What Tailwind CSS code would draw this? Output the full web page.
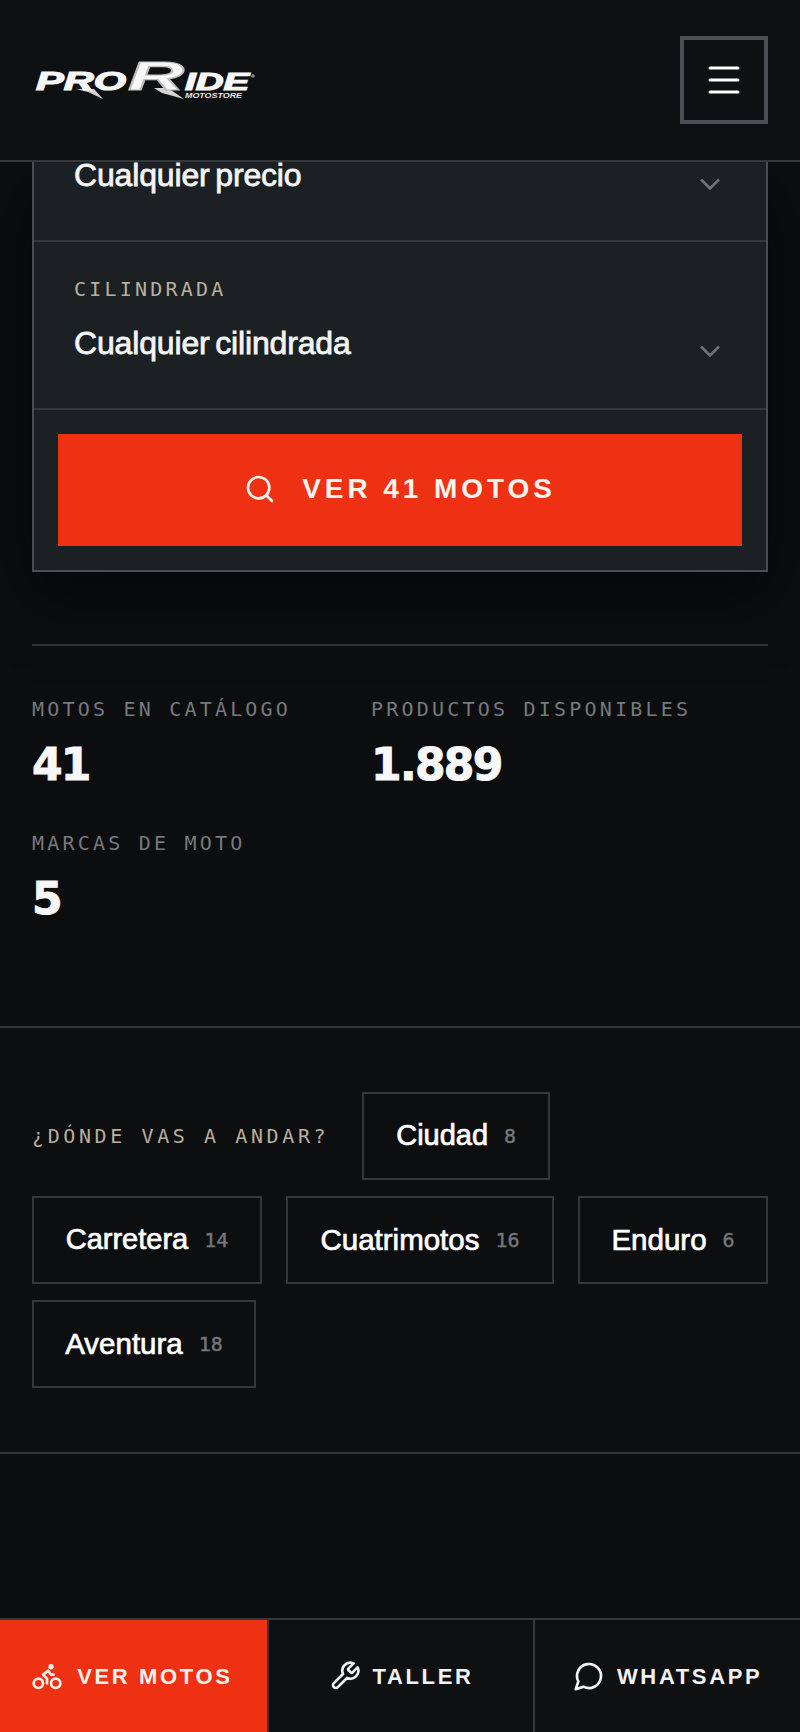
<!DOCTYPE html>
<html lang="es">
<head>
  <meta charset="UTF-8" />
  <meta name="viewport" content="width=device-width, initial-scale=1.0"/>
  <title>ProRide Motostore</title>
  <script src="https://cdn.jsdelivr.net/npm/@tailwindcss/browser@4"></script>
</head>
<body class="bg-[#0b0d0f] text-white font-['Liberation_Sans',Arial,sans-serif]">
<div class="h-[1732px] w-[800px] flex flex-col overflow-hidden">

  <!-- Header -->
  <header class="h-[162px] shrink-0 bg-[#0e1012] border-b-2 border-[#34373b] flex items-center justify-between px-8">
    <svg width="228" height="40" viewBox="0 0 228 40" class="overflow-visible font-['Liberation_Sans',sans-serif]" role="img" aria-label="ProRide Motostore">
      <polygon points="44,29 62,29 71,39 56,32" fill="#d0d0d0"/>
      <polygon points="122,28 136,28 152,39 130,33" fill="#d5d5d5"/>
      <text x="4" y="30" font-size="25" font-weight="700" font-style="italic" fill="#f7f7f7" stroke="#f7f7f7" stroke-width="1.2" textLength="90" lengthAdjust="spacingAndGlyphs">PRO</text>
      <text x="96" y="30" font-size="40" font-weight="700" font-style="italic" fill="#f7f7f7" stroke="#bdbdbd" stroke-width="1.2" textLength="56" lengthAdjust="spacingAndGlyphs">R</text>
      <text x="153" y="30" font-size="23" font-weight="700" font-style="italic" fill="#f7f7f7" stroke="#f7f7f7" stroke-width="1.2" textLength="64" lengthAdjust="spacingAndGlyphs">IDE</text>
      <text x="153" y="38" font-size="7.5" font-weight="700" font-style="italic" fill="#e8e8e8" textLength="57" lengthAdjust="spacingAndGlyphs">MOTOSTORE</text>
      <circle cx="221" cy="16" r="1.8" fill="#8a8a8a"/>
    </svg>
    <button class="w-[88px] h-[88px] border-4 border-[#4b4e54] flex items-center justify-center">
      <svg width="32" height="30" viewBox="0 0 32 30" fill="none" stroke="#fff" stroke-width="3" stroke-linecap="round">
        <path d="M2 3h28M2 15h28M2 27h28"/>
      </svg>
    </button>
  </header>

  <main class="flex-1 overflow-hidden">
    <div class="px-8">
      <!-- Filtros -->
      <div class="bg-[#1b2023] border-x-2 border-b-2 border-[#4b4e54] shadow-[0_24px_60px_rgba(0,0,0,0.5)]">
        <div class="h-[80px] border-b-2 border-[#33383b] flex justify-between pl-10 pr-[46px]">
          <span class="-mt-[1px] text-[32px] leading-[28px] tracking-[-0.005em] [word-spacing:-3px] [-webkit-text-stroke:0.8px_#f4f4f4] text-[#f4f4f4]">Cualquier precio</span>
          <svg width="20" height="12" viewBox="0 0 20 12" fill="none" stroke="#6f7378" stroke-width="2.6" class="mt-[16px]"><path d="M1 1.5l9 9 9-9"/></svg>
        </div>
        <div class="h-[168px] border-b-2 border-[#33383b] pl-10 pr-[46px] pt-[37px]">
          <div class="font-['DejaVu_Sans_Mono',monospace] text-[20px] leading-[20px] tracking-[3.2px] text-[#b8b09c]">CILINDRADA</div>
          <div class="flex justify-between mt-[24px]">
            <span class="text-[32px] leading-[40px] tracking-[-0.005em] [word-spacing:-3px] [-webkit-text-stroke:0.8px_#f4f4f4] text-[#f4f4f4]">Cualquier cilindrada</span>
            <svg width="20" height="12" viewBox="0 0 20 12" fill="none" stroke="#6f7378" stroke-width="2.6" class="mt-[22px]"><path d="M1 1.5l9 9 9-9"/></svg>
          </div>
        </div>
        <div class="p-6">
          <button class="w-full h-[112px] pb-[2px] bg-[#ee3112] flex items-center justify-center gap-[26px] text-[28px] font-bold tracking-[0.14em] text-[#fff5ee]">
            <svg width="32" height="32" viewBox="0 0 24 24" fill="none" stroke="currentColor" stroke-width="2" stroke-linecap="round" stroke-linejoin="round"><circle cx="11" cy="11" r="8"/><path d="m21 21-4.3-4.3"/></svg>
            VER 41 MOTOS
          </button>
        </div>
      </div>

      <!-- Cifras -->
      <div class="mt-[72px] border-t-2 border-[#2f3236] pt-[53px] pb-[104px] flex flex-wrap gap-x-[80px] gap-y-[45px]">
        <div>
          <div class="font-['DejaVu_Sans_Mono',monospace] text-[20px] leading-[20px] tracking-[3.2px] text-[#77797d]">MOTOS EN CATÁLOGO</div>
          <div class="mt-[23px] text-[44px] leading-[46px] font-bold tracking-[-0.04em] [-webkit-text-stroke:1px_#f7f7f7] font-['DejaVu_Sans',sans-serif] text-[#f7f7f7]">41</div>
        </div>
        <div>
          <div class="font-['DejaVu_Sans_Mono',monospace] text-[20px] leading-[20px] tracking-[3.2px] text-[#77797d]">PRODUCTOS DISPONIBLES</div>
          <div class="mt-[23px] text-[44px] leading-[46px] font-bold tracking-[-0.04em] [-webkit-text-stroke:1px_#f7f7f7] font-['DejaVu_Sans',sans-serif] text-[#f7f7f7]">1.889</div>
        </div>
        <div>
          <div class="font-['DejaVu_Sans_Mono',monospace] text-[20px] leading-[20px] tracking-[3.2px] text-[#77797d]">MARCAS DE MOTO</div>
          <div class="mt-[23px] text-[44px] leading-[46px] font-bold tracking-[-0.04em] [-webkit-text-stroke:1px_#f7f7f7] font-['DejaVu_Sans',sans-serif] text-[#f7f7f7]">5</div>
        </div>
      </div>
    </div>

    <!-- Terreno -->
    <section class="border-y-2 border-[#2f3236] px-8 pt-[64px] pb-[64px] flex flex-wrap items-center gap-x-6 gap-y-4 bg-[#0c0e10]">
      <span class="mr-[9px] font-['DejaVu_Sans_Mono',monospace] text-[20px] leading-[20px] tracking-[3.6px] text-[#b8b09c]">¿DÓNDE VAS A ANDAR?</span>
      <a class="w-[188px] h-[88px] border-2 border-[#33373a] flex items-center justify-center gap-4 text-[29px] [-webkit-text-stroke:0.7px_white]">Ciudad <span class="font-['DejaVu_Sans_Mono',monospace] text-[20px] [-webkit-text-stroke:0.4px_#75787b] text-[#75787b]">8</span></a>
      <a class="w-[230px] h-[88px] border-2 border-[#33373a] flex items-center justify-center gap-4 text-[29px] [-webkit-text-stroke:0.7px_white]">Carretera <span class="font-['DejaVu_Sans_Mono',monospace] text-[20px] [-webkit-text-stroke:0.4px_#75787b] text-[#75787b]">14</span></a>
      <a class="w-[268px] h-[88px] border-2 border-[#33373a] flex items-center justify-center gap-4 text-[29.5px] [-webkit-text-stroke:0.7px_white]">Cuatrimotos <span class="font-['DejaVu_Sans_Mono',monospace] text-[20px] [-webkit-text-stroke:0.4px_#75787b] text-[#75787b]">16</span></a>
      <a class="w-[190px] h-[88px] border-2 border-[#33373a] flex items-center justify-center gap-4 text-[29.5px] [-webkit-text-stroke:0.7px_white]">Enduro <span class="font-['DejaVu_Sans_Mono',monospace] text-[20px] [-webkit-text-stroke:0.4px_#75787b] text-[#75787b]">6</span></a>
      <a class="w-[224px] h-[88px] border-2 border-[#33373a] flex items-center justify-center gap-4 text-[29.5px] [-webkit-text-stroke:0.7px_white]">Aventura <span class="font-['DejaVu_Sans_Mono',monospace] text-[20px] [-webkit-text-stroke:0.4px_#75787b] text-[#75787b]">18</span></a>
    </section>
  </main>

  <!-- Barra inferior -->
  <nav class="h-[114px] shrink-0 grid grid-cols-3 border-t-2 border-[#34373b] bg-[#0e1012] text-[22px] font-bold tracking-[0.12em]">
    <a class="bg-[#ee3112] pr-[3px] flex items-center justify-center gap-[14px] text-[#fff1ea]">
      <svg width="32" height="32" viewBox="0 0 24 24" fill="none" stroke="currentColor" stroke-width="2" stroke-linecap="round" stroke-linejoin="round"><circle cx="18.5" cy="17.5" r="3.5"/><circle cx="5.5" cy="17.5" r="3.5"/><circle cx="15" cy="5" r="1"/><path d="M12 17.5V14l-3-3 4-3 2 3h2"/></svg>
      VER MOTOS
    </a>
    <a class="border-l-2 border-[#34373b] flex items-center justify-center gap-[12px] text-[#f2f2f2]">
      <svg width="32" height="32" viewBox="0 0 24 24" fill="none" stroke="currentColor" stroke-width="2" stroke-linecap="round" stroke-linejoin="round"><path d="M14.7 6.3a1 1 0 0 0 0 1.4l1.6 1.6a1 1 0 0 0 1.4 0l3.77-3.77a6 6 0 0 1-7.94 7.94l-6.91 6.91a2.12 2.12 0 0 1-3-3l6.91-6.91a6 6 0 0 1 7.94-7.94l-3.76 3.76z"/></svg>
      TALLER
    </a>
    <a class="border-l-2 border-[#34373b] flex items-center justify-center gap-[12px] text-[#f2f2f2]">
      <svg width="32" height="32" viewBox="0 0 24 24" fill="none" stroke="currentColor" stroke-width="2" stroke-linecap="round" stroke-linejoin="round"><path d="M7.9 20A9 9 0 1 0 4 16.1L2 22Z"/></svg>
      WHATSAPP
    </a>
  </nav>
</div>
</body>
</html>
